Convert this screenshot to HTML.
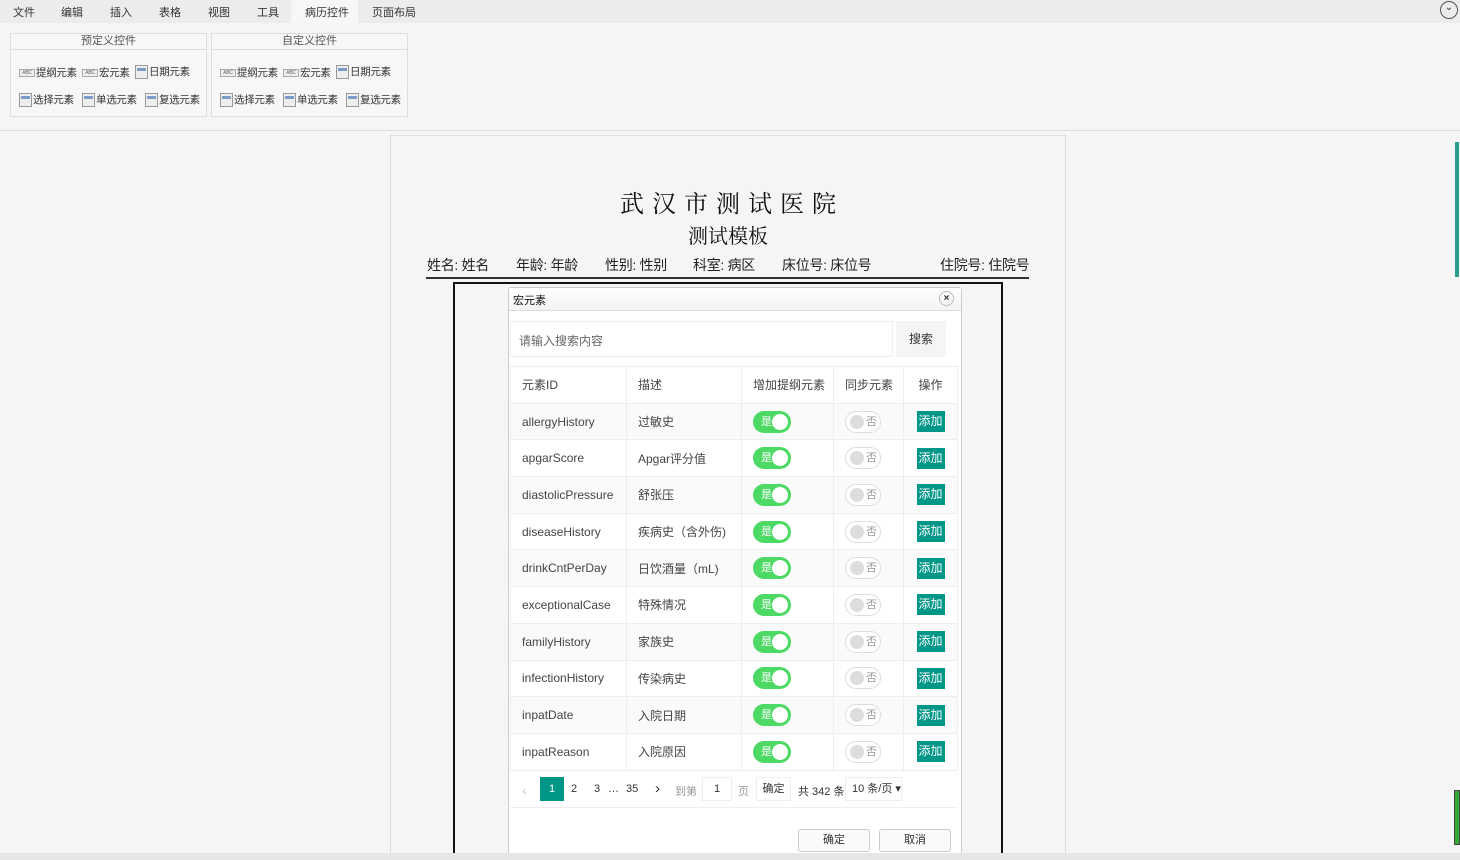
<!DOCTYPE html>
<html style="width:1460px;height:860px;overflow:hidden"><head><meta charset="utf-8"><style>
*{box-sizing:border-box;margin:0;padding:0}
body{width:1460px;height:860px;overflow:hidden;background:#f5f5f5;font-family:"Liberation Sans","Noto Sans CJK SC",sans-serif;font-size:12px;color:#333;position:relative}
.abs{position:absolute}
.menu{left:0;top:0;width:1460px;height:23px;background:#ececec}
.menu span{position:absolute;top:4px;font-size:11px;color:#333}
.grp{border:1px solid #ddd;background:#f7f7f7}
.grp .t{height:16px;border-bottom:1px solid #ddd;text-align:center;font-size:11px;color:#555;line-height:15px}
.it{position:absolute;font-size:10.5px;color:#333;display:flex;align-items:center;gap:1px;letter-spacing:-0.3px}
.ic1{width:16px;height:8px;border:1px solid #aaa;font-size:5px;line-height:6px;color:#666;background:#eee;text-align:center;font-style:normal}
.ic2{width:13px;height:14px;border:1px solid #999;background:#eee;position:relative}
.ic2:before{content:"";position:absolute;left:1px;top:2px;width:9px;height:3px;background:#7b9cc6}
table{border-collapse:collapse;position:absolute;left:510px;top:366px;width:448px}
td{height:36.7px;border:1px solid #eee;padding-left:11px;font-size:12px;color:#444}
tr:nth-child(even) td{background:#fafafa}
.on{display:inline-block;width:38px;height:22px;border-radius:11px;background:#4cd964;position:relative;color:#fff;font-size:11px;line-height:22px;padding-left:8px}
.on:after{content:"";position:absolute;right:3px;top:3px;width:16px;height:16px;border-radius:50%;background:#fff}
.off{display:inline-block;width:36px;height:22px;border-radius:11px;border:1px solid #ddd;background:#fff;position:relative;color:#999;font-size:11px;line-height:20px;padding-left:20px}
.off:before{content:"";position:absolute;left:4px;top:3px;width:14px;height:14px;border-radius:50%;background:#ddd}
.add{display:inline-block;background:#009688;color:#fff;font-size:12px;width:28px;height:21px;line-height:21px;text-align:center}
.hd{position:absolute;top:255px;font-size:14px;color:#222;letter-spacing:-0.3px}
</style></head><body>
<div class="abs menu">
<span style="left:13px">文件</span><span style="left:61px">编辑</span><span style="left:110px">插入</span><span style="left:159px">表格</span><span style="left:208px">视图</span><span style="left:257px">工具</span>
<div class="abs" style="left:291px;top:0;width:67px;height:23px;background:#f7f7f7"></div>
<span style="left:305px">病历控件</span><span style="left:372px">页面布局</span>
<div class="abs" style="left:1440px;top:1px;width:18px;height:18px;border:1px solid #555;border-radius:50%;text-align:center;line-height:12px;font-size:10px">⌄</div>
</div>
<div class="abs" style="left:0;top:130px;width:1460px;height:1px;background:#ddd"></div>
<div class="abs grp" style="left:10px;top:33px;width:197px;height:84px"><div class="t">预定义控件</div></div>
<div class="abs grp" style="left:211px;top:33px;width:197px;height:84px"><div class="t">自定义控件</div></div>
<div class="it" style="left:19px;top:65px"><i class="ic1">ABC</i>提纲元素</div>
<div class="it" style="left:82px;top:65px"><i class="ic1">ABC</i>宏元素</div>
<div class="it" style="left:135px;top:64px"><i class="ic2"></i>日期元素</div>
<div class="it" style="left:19px;top:92px"><i class="ic2"></i>选择元素</div>
<div class="it" style="left:82px;top:92px"><i class="ic2"></i>单选元素</div>
<div class="it" style="left:145px;top:92px"><i class="ic2"></i>复选元素</div>
<div class="it" style="left:220px;top:65px"><i class="ic1">ABC</i>提纲元素</div>
<div class="it" style="left:283px;top:65px"><i class="ic1">ABC</i>宏元素</div>
<div class="it" style="left:336px;top:64px"><i class="ic2"></i>日期元素</div>
<div class="it" style="left:220px;top:92px"><i class="ic2"></i>选择元素</div>
<div class="it" style="left:283px;top:92px"><i class="ic2"></i>单选元素</div>
<div class="it" style="left:346px;top:92px"><i class="ic2"></i>复选元素</div>

<div class="abs" style="left:1455px;top:142px;width:4px;height:135px;background:#2a9d8f"></div>
<div class="abs" style="left:1454px;top:790px;width:6px;height:55px;background:#3a3;border:1px solid #444"></div>

<div class="abs" style="left:390px;top:135px;width:676px;height:725px;border:1px solid #ddd;border-bottom:none;background:#f5f5f5"></div>
<div class="abs" style="left:390px;top:184px;width:676px;text-align:center;font-family:'Liberation Serif','Noto Serif CJK SC',serif;font-size:24px;letter-spacing:8px;padding-left:8px;color:#111">武汉市测试医院</div>
<div class="abs" style="left:390px;top:220px;width:676px;text-align:center;font-family:'Liberation Serif','Noto Serif CJK SC',serif;font-size:20px;color:#111">测试模板</div>
<div class="hd" style="left:427px">姓名: 姓名</div>
<div class="hd" style="left:516px">年龄: 年龄</div>
<div class="hd" style="left:605px">性别: 性别</div>
<div class="hd" style="left:693px">科室: 病区</div>
<div class="hd" style="left:782px">床位号: 床位号</div>
<div class="hd" style="left:940px">住院号: 住院号</div>
<div class="abs" style="left:426px;top:277px;width:603px;height:2px;background:#333"></div>
<div class="abs" style="left:453px;top:282px;width:550px;height:578px;border:2px solid #111;border-bottom:none"></div>

<div class="abs" style="left:508px;top:287px;width:454px;height:573px;background:#fff;border:1px solid #ccc;border-bottom:none;border-radius:3px 3px 0 0"></div>
<div class="abs" style="left:509px;top:288px;width:452px;height:23px;background:linear-gradient(#fff,#f3f3f3);border-bottom:1px solid #ddd;font-size:11px;padding:4px 4px;color:#111">宏元素</div>
<div class="abs" style="left:939px;top:291px;width:15px;height:15px;border:1px solid #bbb;border-radius:50%;font-size:10px;text-align:center;line-height:13px;font-weight:bold">×</div>
<div class="abs" style="left:510px;top:321px;width:383px;height:36px;border:1px solid #eee;padding:10px 8px;color:#666">请输入搜索内容</div>
<div class="abs" style="left:896px;top:321px;width:50px;height:36px;background:#f5f5f5;text-align:center;line-height:36px;color:#333">搜索</div>
<table>
<tr><td style="width:116px">元素ID</td><td style="width:115px">描述</td><td style="width:92px">增加提纲元素</td><td style="width:70px">同步元素</td><td style="text-align:center;padding:0">操作</td></tr>
<tr><td>allergyHistory</td><td>过敏史</td><td><span class="on">是</span></td><td><span class="off">否</span></td><td style="text-align:center;padding:0"><span class="add">添加</span></td></tr>
<tr><td>apgarScore</td><td>Apgar评分值</td><td><span class="on">是</span></td><td><span class="off">否</span></td><td style="text-align:center;padding:0"><span class="add">添加</span></td></tr>
<tr><td>diastolicPressure</td><td>舒张压</td><td><span class="on">是</span></td><td><span class="off">否</span></td><td style="text-align:center;padding:0"><span class="add">添加</span></td></tr>
<tr><td>diseaseHistory</td><td>疾病史（含外伤)</td><td><span class="on">是</span></td><td><span class="off">否</span></td><td style="text-align:center;padding:0"><span class="add">添加</span></td></tr>
<tr><td>drinkCntPerDay</td><td>日饮酒量（mL)</td><td><span class="on">是</span></td><td><span class="off">否</span></td><td style="text-align:center;padding:0"><span class="add">添加</span></td></tr>
<tr><td>exceptionalCase</td><td>特殊情况</td><td><span class="on">是</span></td><td><span class="off">否</span></td><td style="text-align:center;padding:0"><span class="add">添加</span></td></tr>
<tr><td>familyHistory</td><td>家族史</td><td><span class="on">是</span></td><td><span class="off">否</span></td><td style="text-align:center;padding:0"><span class="add">添加</span></td></tr>
<tr><td>infectionHistory</td><td>传染病史</td><td><span class="on">是</span></td><td><span class="off">否</span></td><td style="text-align:center;padding:0"><span class="add">添加</span></td></tr>
<tr><td>inpatDate</td><td>入院日期</td><td><span class="on">是</span></td><td><span class="off">否</span></td><td style="text-align:center;padding:0"><span class="add">添加</span></td></tr>
<tr><td>inpatReason</td><td>入院原因</td><td><span class="on">是</span></td><td><span class="off">否</span></td><td style="text-align:center;padding:0"><span class="add">添加</span></td></tr>
</table>
<div class="abs" style="left:510px;top:807px;width:448px;height:1px;background:#eee"></div>
<div class="abs" style="left:522px;top:782px;color:#ccc;font-size:14px">‹</div>
<div class="abs" style="left:540px;top:777px;width:24px;height:24px;background:#009688;color:#fff;text-align:center;line-height:24px;font-size:11px">1</div>
<div class="abs" style="left:571px;top:783px;font-size:11px">2</div>
<div class="abs" style="left:594px;top:783px;font-size:11px">3</div>
<div class="abs" style="left:608px;top:783px;font-size:11px">…</div>
<div class="abs" style="left:626px;top:783px;font-size:11px">35</div>
<div class="abs" style="left:655px;top:780px;font-size:15px;color:#333">›</div>
<div class="abs" style="left:675px;top:783px;font-size:11px;color:#999">到第</div>
<div class="abs" style="left:702px;top:777px;width:30px;height:24px;border:1px solid #eee;text-align:center;line-height:22px;font-size:11px">1</div>
<div class="abs" style="left:738px;top:783px;font-size:11px;color:#999">页</div>
<div class="abs" style="left:756px;top:777px;width:35px;height:24px;border:1px solid #eee;text-align:center;line-height:22px;font-size:11px">确定</div>
<div class="abs" style="left:798px;top:783px;font-size:11px">共 342 条</div>
<div class="abs" style="left:845px;top:777px;width:57px;height:24px;border:1px solid #eee;line-height:22px;font-size:11px;padding-left:6px">10 条/页 ▾</div>
<div class="abs" style="left:798px;top:829px;width:72px;height:23px;border:1px solid #ccc;border-radius:3px;text-align:center;line-height:21px;font-size:11px;background:#fafafa">确定</div>
<div class="abs" style="left:879px;top:829px;width:72px;height:23px;border:1px solid #ccc;border-radius:3px;text-align:center;line-height:21px;font-size:11px;background:#fafafa">取消</div>
<div class="abs" style="left:0;top:853px;width:1460px;height:7px;background:#e6e6e6"></div>
</body></html>
